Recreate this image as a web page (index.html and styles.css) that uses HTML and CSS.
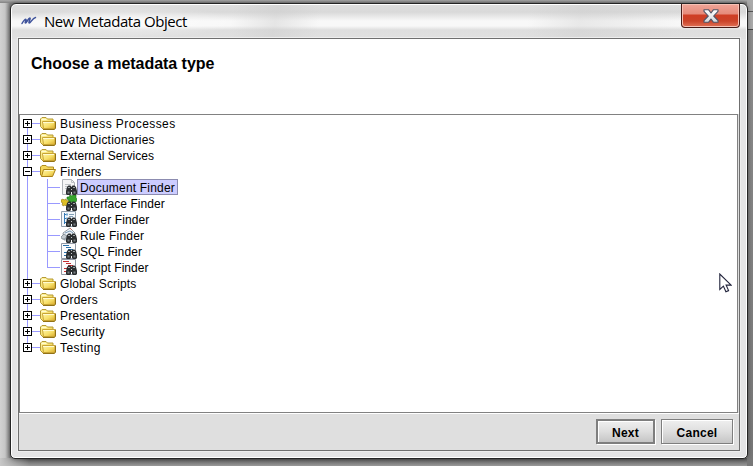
FILE: index.html
```html
<!DOCTYPE html>
<html lang="en">
<head>
<meta charset="utf-8">
<title>New Metadata Object</title>
<link rel="stylesheet" href="styles.css">
</head>
<body>
<svg class="defs" aria-hidden="true">
  <defs>
    <linearGradient id="gold" x1="0" y1="0" x2="1" y2="1"><stop offset="0" stop-color="#fff7ad"/><stop offset=".55" stop-color="#f7df68"/><stop offset="1" stop-color="#d9a92b"/></linearGradient>
    <linearGradient id="silver" x1="0" y1="0" x2="0" y2="1"><stop offset="0" stop-color="#fff"/><stop offset="1" stop-color="#d5d8dc"/></linearGradient>
    <symbol id="folder" viewBox="0 0 16 16">
      <path d="M.5 11.500V4L2 2.500h4L7.500 4H13v9l-1 1H3z" fill="url(#gold)" stroke="#b59a35"/>
      <path d="M2.500 6.500h12.500v7H3.500z" fill="url(#gold)" stroke="#c9a535"/>
      <path d="M3 7.500h11M1.500 4.500h5" stroke="#fffbd0" fill="none"/>
      <path d="M3 14.500h11.500l1-1.500V6.500" stroke="#927216" fill="none"/>
    </symbol>
    <symbol id="open" viewBox="0 0 16 16">
      <path d="M.5 12V4L2 2.500h4L7.500 4h6v3l-2 6H2z" fill="#f4d75b" stroke="#b08d1e"/>
      <path d="M3.500 6.500h12l-3 7H1.500z" fill="url(#gold)" stroke="#aa8216"/>
      <path d="M4.500 7.500h9" stroke="#fffbd0"/>
    </symbol>
    <symbol id="binoculars" viewBox="0 0 16 16">
      <path d="M6 8l1.500-1.500h2L10.500 8l1-1.500h2L15 8l1 4v3l-1 1h-3l-1-1v-2h-1v2l-1 1H6l-1-1v-3z" fill="#2b2e30"/>
      <path d="M7 8.500h2M12 8.500h2" stroke="#9ba1a4"/>
      <path d="M6.500 12.500h2v2h-2zM12.500 12.500h2v2h-2z" fill="#777e81"/>
      <path d="M10 10.500h1" stroke="#c4c8ca"/>
    </symbol>
    <symbol id="document" viewBox="0 0 16 16"><path d="M1.500.5h9l3 3v12h-12z" fill="#f5f5f5" stroke="#b0b4b8"/><path d="M10.500.5v3h3M4 5.500h6M4 7.500h4M4 9.500h2" stroke="#bfc3c6" fill="none"/><use href="#binoculars"/></symbol>
    <symbol id="interface" viewBox="0 0 16 16"><path d="M0 5l2-1 1 1 2-1 1 2 2-1 1 2-2 1 1 2-3 1-1-1-2 1-1-2 1-1-2-1z" fill="#ddbf26" stroke="#8d7615" stroke-width=".6"/><path d="M6 2h2l1-2 2 1 1-1h3v3l1 1-1 3-3 1-2-1H8V5L6 4z" fill="#36a52d" stroke="#176e1a" stroke-width=".6"/><use href="#binoculars"/></symbol>
    <symbol id="order" viewBox="0 0 16 16"><path d="M.5.5h14v15H.5z" fill="#f3f8fc" stroke="#8f9eab"/><path d="M3.500 2v11M3.500 3.500h3M3.500 7.500h3M3.500 11.500h3" stroke="#3279b5" fill="none"/><path d="M8 3.500h5M8 5.500h4" stroke="#819eb5"/><path d="M5 2.500h2v2H5zM5 6.500h2v2H5z" fill="#74a9d2"/><use href="#binoculars"/></symbol>
    <symbol id="rule" viewBox="0 0 16 16"><path d="M2 6l7-5 5 5-2 6-9 1z" fill="#edf1f4" stroke="#929ba2"/><path d="M0 10l3-3 3 2-2 3H1z" fill="#c4cbd0" stroke="#6e7880" stroke-width=".7"/><path d="M4 6l5-2 3 2" stroke="#7799b7" fill="none"/><path d="M9 1l2 2" stroke="#cb7562"/><use href="#binoculars"/></symbol>
    <symbol id="sql" viewBox="0 0 16 16"><path d="M.5.5h14v15H.5z" fill="#fcfcfd" stroke="#9299a5"/><path d="M2 2.500h6M5 4.500h5M7 6.500h5M3 9.500h3M3 12.500h2" stroke="#2970a8"/><use href="#binoculars"/></symbol>
    <symbol id="script" viewBox="0 0 16 16"><path d="M.5.5h14v15H.5z" fill="#fcfcfd" stroke="#9299a5"/><path d="M2 2.500h6M5 4.500h5M7 6.500h5M3 9.500h3M3 12.500h2" stroke="#c52f32"/><use href="#binoculars"/></symbol>
  </defs>
</svg>
<main class="window">
  <header class="titlebar">
    <svg class="logo" viewBox="0 0 16 10"><path d="M1 7.500C3 4 4.500 3 5 3.500S3.500 7 4.500 7 7.500 2 8.800 2 7 7 8.300 7 11.500 2 14.500 1.500" fill="none" stroke="#3e529b" stroke-width="1.500" stroke-linecap="round" stroke-linejoin="round"/></svg>
    <h1 class="title">New Metadata Object</h1>
    <button class="close" aria-label="Close"><svg viewBox="0 0 16 14"><path d="M1 .7h4.500L8 4l2.500-3.300H15v1.600L10.700 7l4.300 4.500v1.800h-4.500L8 10l-2.500 3.300H1v-1.800L5.300 7 1 2.300z" fill="url(#silver)" stroke="#515466" stroke-width="1.100" stroke-linejoin="round"/></svg></button>
  </header>
  <section class="content">
    <h2 class="heading"><span>Choose a metadata type</span></h2>
    <ul class="tree">
      <li><div class="row"><i class="toggle plus"></i><svg class="icon"><use href="#folder"/></svg><span class="label wide">Business Processes</span></div></li>
      <li><div class="row"><i class="toggle plus"></i><svg class="icon"><use href="#folder"/></svg><span class="label">Data Dictionaries</span></div></li>
      <li><div class="row"><i class="toggle plus"></i><svg class="icon"><use href="#folder"/></svg><span class="label tight">External Services</span></div></li>
      <li><div class="row"><i class="toggle"></i><svg class="icon"><use href="#open"/></svg><span class="label">Finders</span></div>
        <ul class="children">
          <li class="row"><svg class="icon"><use href="#document"/></svg><span class="label selected">Document Finder</span></li>
          <li class="row"><svg class="icon"><use href="#interface"/></svg><span class="label tight">Interface Finder</span></li>
          <li class="row"><svg class="icon"><use href="#order"/></svg><span class="label snug">Order Finder</span></li>
          <li class="row"><svg class="icon"><use href="#rule"/></svg><span class="label">Rule Finder</span></li>
          <li class="row"><svg class="icon"><use href="#sql"/></svg><span class="label snug">SQL Finder</span></li>
          <li class="row"><svg class="icon"><use href="#script"/></svg><span class="label tight">Script Finder</span></li>
        </ul>
      </li>
      <li><div class="row"><i class="toggle plus"></i><svg class="icon"><use href="#folder"/></svg><span class="label snug">Global Scripts</span></div></li>
      <li><div class="row"><i class="toggle plus"></i><svg class="icon"><use href="#folder"/></svg><span class="label">Orders</span></div></li>
      <li><div class="row"><i class="toggle plus"></i><svg class="icon"><use href="#folder"/></svg><span class="label">Presentation</span></div></li>
      <li><div class="row"><i class="toggle plus"></i><svg class="icon"><use href="#folder"/></svg><span class="label">Security</span></div></li>
      <li><div class="row"><i class="toggle plus"></i><svg class="icon"><use href="#folder"/></svg><span class="label wide">Testing</span></div></li>
    </ul>
    <footer class="actions"><button class="btn next">Next</button><button class="btn cancel">Cancel</button></footer>
  </section>
</main>
<svg class="cursor" viewBox="0 0 13 20"><path d="M.8 1v15.500l3.600-3.400 2.500 5.700 2.700-1.200-2.500-5.500h5z" fill="#fff" stroke="#22243c" stroke-width="1.100"/></svg>
</body>
</html>
```
FILE: styles.css
```css
* { box-sizing: border-box; }
body {
  margin: 0;
  width: 753px;
  height: 466px;
  padding: 3px 5px 7px 10px;
  overflow: hidden;
  font: 12px/16px "Liberation Sans", Arial, sans-serif;
  color: #000;
  background:
    linear-gradient(#555, #555) right 11px / 5px 1px no-repeat,
    linear-gradient(#464646, #464646) right 29px / 5px 1px no-repeat,
    linear-gradient(#aaa 0 29px, #8c8c8c 30px, #777 100%) right top / 6px 466px no-repeat,
    linear-gradient(#aaa, #838383) 0 0 / 100% 3px no-repeat,
    linear-gradient(90deg, #c8c8c8, #0000 30px) 0 100% / 100% 8px no-repeat,
    linear-gradient(#555, #999) 0 100% / 100% 8px no-repeat,
    linear-gradient(90deg, #d2d2d2, #c6c6c6 5px, #828282 10px);
}
.defs { position: absolute; width: 0; height: 0; }
.window {
  width: 738px;
  height: 456px;
  border: 1px solid #252525;
  border-radius: 6px 6px 5px 5px;
  padding: 0 7px 7px;
  background:
    radial-gradient(ellipse at 50% 50%, #fff9, #fff0 70%) 0 2px / 230px 32px no-repeat,
    linear-gradient(100deg, #d5d5d500 30%, #c9c9c966 36%, #d5d5d500 42%, #d5d5d500 70%, #c9c9c955 77%, #e8e8e800 91%) 0 0 / 100% 35px no-repeat,
    linear-gradient(#dfdfdf, #d9d9d9 8px, #f8f8f8 17px, #f8f8f8 22px, #dedede 26px, #e0e0e0 34px) 0 0 / 100% 35px no-repeat,
    #e4e4e5;
  box-shadow: inset 0 0 0 1px #fff, 0 0 4px #0006;
}
.titlebar { height: 34px; display: flex; align-items: flex-start; }
.logo { width: 16px; height: 10px; margin: 12px 0 0 3px; }
.title {
  margin: 6px 0 0 7px;
  font: 15px/22px "Open Sans", sans-serif;
  letter-spacing: -.45px;
  white-space: nowrap;
}
.close {
  margin-left: auto;
  width: 59px;
  height: 24px;
  padding: 1px 0 0;
  border: 1px solid #481c18;
  border-top: 0;
  border-radius: 0 0 4px 4px;
  background: linear-gradient(#f0a598, #e58b7b 10px, #cf3e25 11px, #cb4329 17px, #e17257);
  box-shadow: inset 0 0 0 1px #f6c1b5;
}
.close svg { display: block; width: 16px; height: 14px; margin: 0 auto; }
.content {
  height: 413px;
  border: 1px solid #6f6f6f;
  display: flex;
  flex-direction: column;
  background: #dfdfdf;
  box-shadow: 0 0 0 1px #eee;
}
.heading { flex: 0 0 75px; margin: 0; padding: 15px 12px; background: #fff; font-size: 16px; line-height: 19px; letter-spacing: -.03px; }
.tree, .children { list-style: none; margin: 0; padding: 0; }
.tree {
  flex: 0 0 299px;
  width: 719px;
  border: 1px solid #818181;
  padding: 0 0 0 3px;
  background: linear-gradient(#9999ff, #9999ff) 7px 9px / 1px 223px no-repeat, #fff;
}
.row { display: flex; height: 16px; align-items: flex-start; white-space: nowrap; }
.toggle {
  width: 9px;
  height: 9px;
  margin-top: 4px;
  border: 1px solid #000;
  background: linear-gradient(#000, #000) center / 5px 1px no-repeat, #fff;
}
.plus { background: linear-gradient(#000, #000) center / 5px 1px no-repeat, linear-gradient(#000, #000) center / 1px 5px no-repeat, #fff; }
.toggle + .icon { margin-left: 8px; }
.tree > li > .row { background: linear-gradient(#9999ff, #9999ff) 9px 8px / 8px 1px no-repeat; }
.icon { width: 16px; height: 16px; flex: none; }
.label { height: 16px; line-height: 18px; padding: 0 3px 0 4px; letter-spacing: .2px; }
.wide { letter-spacing: .42px; }
.snug { letter-spacing: .12px; }
.tight { letter-spacing: .04px; }
.children { padding-left: 24px; background: linear-gradient(#9999ff, #9999ff) 24px 0 / 1px 89px no-repeat; }
.children .row { padding-left: 14px; background: linear-gradient(#9999ff, #9999ff) 0 8px / 13px 1px no-repeat; }
.children .label { padding-left: 3px; }
.children .selected { padding: 0 2px; line-height: 16px; border: 1px solid #8c8cb0; background: #ccccff; }
.actions { flex: 1; display: flex; justify-content: flex-end; align-items: flex-start; gap: 6px; padding: 5px 6px 0; border-top: 1px solid #fff; }
.btn {
  height: 25px;
  padding: 3px 0 0;
  font: bold 12px/16px "Liberation Sans", Arial, sans-serif;
  letter-spacing: .25px;
  color: #000;
  border: 1px solid #7e7e7e;
  background: linear-gradient(#efefef, #dedede 50%, #c5c5c5);
  box-shadow: inset 1px 1px #fff, 1px 1px #fff;
}
.next { width: 59px; border-width: 2px; padding-top: 2px; }
.cancel { width: 72px; }
.cursor { position: absolute; left: 719px; top: 273px; width: 13px; height: 20px; }
```
